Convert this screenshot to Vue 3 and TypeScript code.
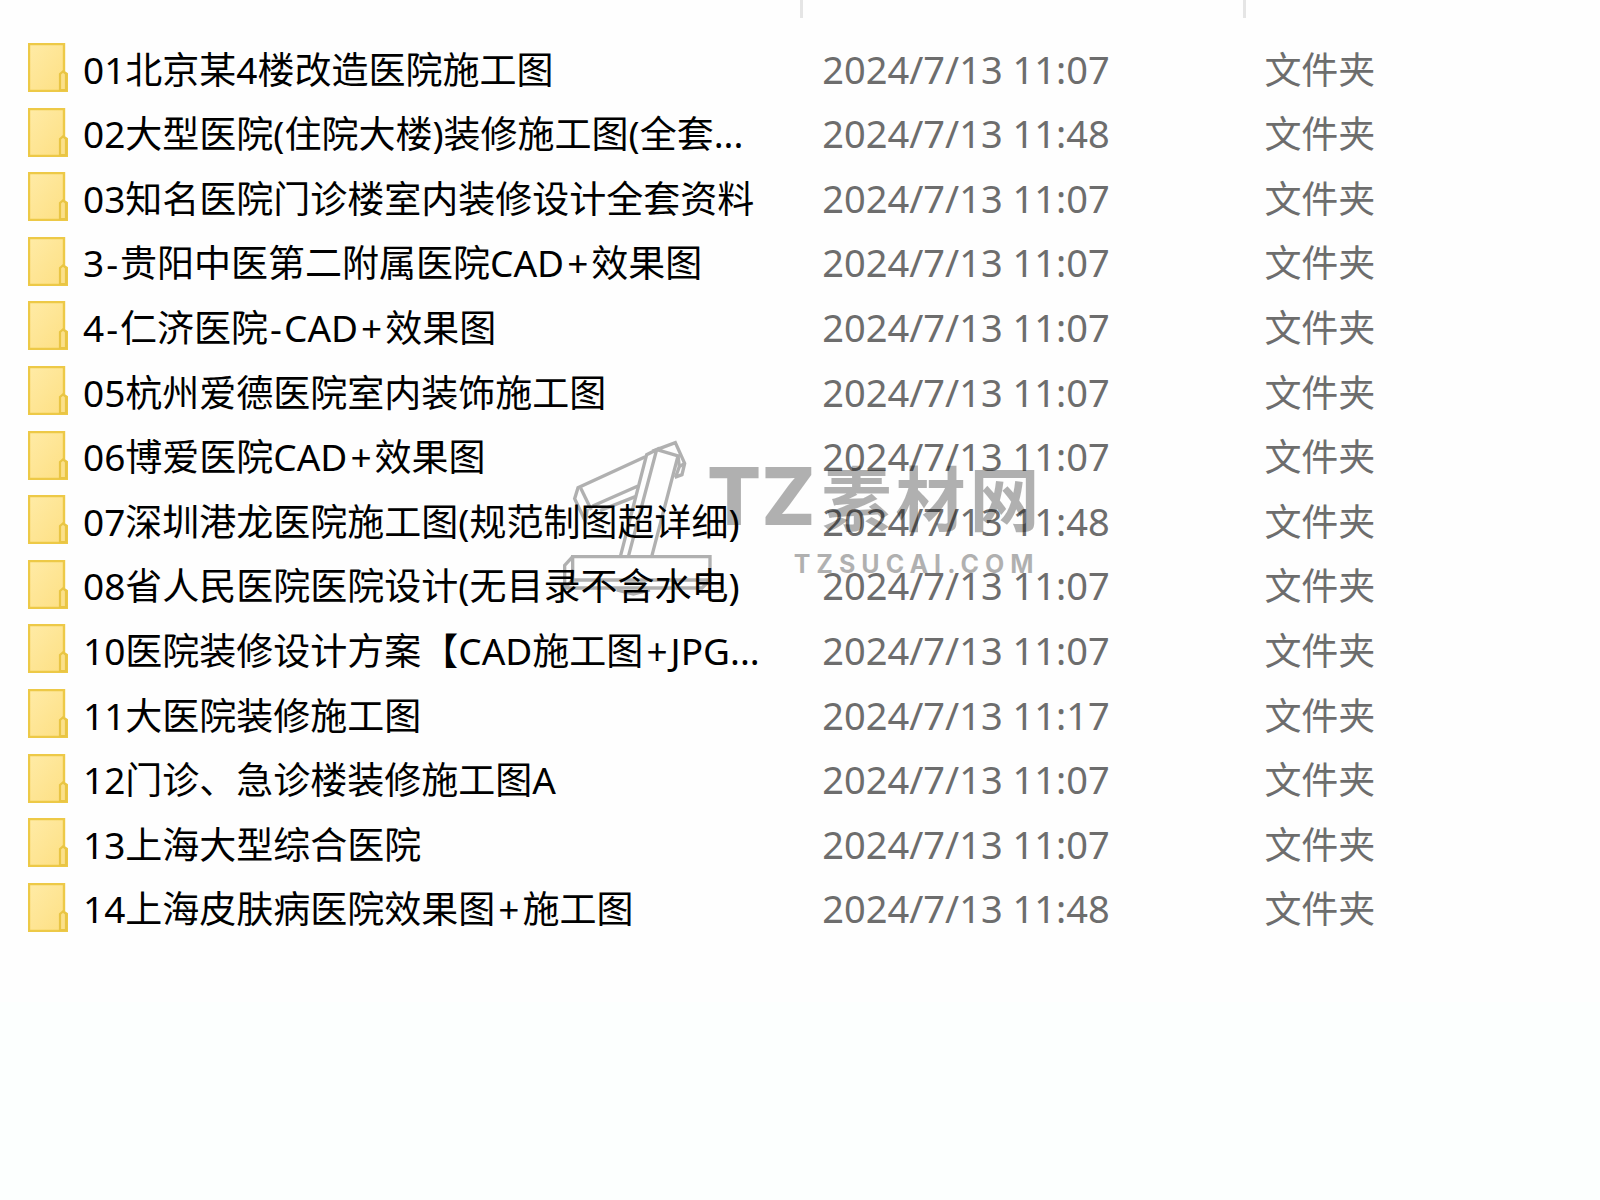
<script setup lang="ts">
interface Entry {
  name: string
  modified: string
}

const kind = '文件夹'

const entries: Entry[] = [
  { name: '01北京某4楼改造医院施工图', modified: '2024/7/13 11:07' },
  { name: '02大型医院(住院大楼)装修施工图(全套...', modified: '2024/7/13 11:48' },
  { name: '03知名医院门诊楼室内装修设计全套资料', modified: '2024/7/13 11:07' },
  { name: '3-贵阳中医第二附属医院CAD+效果图', modified: '2024/7/13 11:07' },
  { name: '4-仁济医院-CAD+效果图', modified: '2024/7/13 11:07' },
  { name: '05杭州爱德医院室内装饰施工图', modified: '2024/7/13 11:07' },
  { name: '06博爱医院CAD+效果图', modified: '2024/7/13 11:07' },
  { name: '07深圳港龙医院施工图(规范制图超详细)', modified: '2024/7/13 11:48' },
  { name: '08省人民医院医院设计(无目录不含水电)', modified: '2024/7/13 11:07' },
  { name: '10医院装修设计方案【CAD施工图+JPG...', modified: '2024/7/13 11:07' },
  { name: '11大医院装修施工图', modified: '2024/7/13 11:17' },
  { name: '12门诊、急诊楼装修施工图A', modified: '2024/7/13 11:07' },
  { name: '13上海大型综合医院', modified: '2024/7/13 11:07' },
  { name: '14上海皮肤病医院效果图+施工图', modified: '2024/7/13 11:48' },
]

// Splits a name so that its joining signs can carry a little side space.
const parts = (name: string): string[] => name.split(/([+-])/).filter(Boolean)
</script>

<template>
  <main class="explorer">
    <div class="listing">
      <div class="columns">
        <span class="col-name"></span>
        <span class="col-date"></span>
      </div>
      <table class="files">
        <colgroup>
          <col class="col-name" />
          <col class="col-date" />
          <col />
        </colgroup>
        <tbody>
          <tr v-for="entry in entries" :key="entry.name">
            <td>
              <div class="name">
                <svg class="folder" viewBox="0 0 40 49" aria-hidden="true">
                  <defs>
                    <linearGradient id="folder-fill" x1="0" y1="0" x2="1" y2="1">
                      <stop offset="0" stop-color="#ffeba6" />
                      <stop offset="1" stop-color="#fddf82" />
                    </linearGradient>
                  </defs>
                  <path d="M1 1H36V29L39 31V48H1Z" fill="url(#folder-fill)" stroke="#edc947" stroke-width="2.4" />
                  <path d="M32 47V31L35 28.5L38 31V47Z" fill="#fbe08a" stroke="#e9c544" stroke-width="2.2" />
                </svg>
                <span class="label"><span
                  v-for="(part, i) in parts(entry.name)"
                  :key="i"
                  :class="{ plus: part === '+', dash: part === '-' }"
                >{{ part }}</span></span>
              </div>
            </td>
            <td class="modified">{{ entry.modified }}</td>
            <td class="kind">{{ kind }}</td>
          </tr>
        </tbody>
      </table>
      <div class="watermark">
        <svg class="crane" viewBox="0 0 540 540" aria-hidden="true">
          <g fill="none" stroke="#000" stroke-width="10">
            <path d="M286 80L84 173L74 206L106 274L112 236" />
            <path d="M92 174L124 240" />
            <path d="M128 228L264 168M150 242L256 200" />
            <path d="M212 376L290 74L320 59L236 376" />
            <path d="M306 376L384 78L320 59L376 38L404 100L396 134L374 142" />
            <path d="M384 78L388 110L404 100M388 110L378 138" />
            <path d="M68 380H480V450H68Z" />
            <path d="M68 380L44 406V474H456L480 450M44 474L68 450" />
            <path d="M200 480L250 492L300 480" />
          </g>
        </svg>
        <div class="brand">
          <div class="brand-title">
            <span class="latin">TZ</span>
            <span class="han"><span>素</span><span>材</span><span>网</span></span>
          </div>
          <div class="domain">TZSUCAI.COM</div>
        </div>
      </div>
    </div>
  </main>
</template>

<style>
body {
  margin: 0;
  background: #fcfffe;
}
</style>

<style scoped>
.explorer {
  min-height: 100vh;
  background: #fcfffe;
  color: #000;
  font-family: "Noto Sans", "Noto Sans CJK SC", sans-serif;
  font-size: 37px;
  line-height: 48px;
}

.listing {
  position: relative;
  padding-bottom: 63px;
  background: #fefefe;
}

.columns {
  display: flex;
  height: 18px;
  margin-bottom: 17px;
}

.columns span {
  box-sizing: border-box;
  border-right: 3px solid #e5e5e5;
}

.col-name {
  width: 50.2%;
}

.col-date {
  width: 27.7%;
}

.files {
  width: 100%;
  table-layout: fixed;
  border-collapse: collapse;
}

.files tr {
  height: 65px;
}

.files tr:nth-child(5n + 2),
.files tr:nth-child(5n + 4) {
  height: 64px;
}

.files td {
  padding: 0;
  white-space: nowrap;
}

.name {
  display: flex;
  align-items: center;
  gap: 15px;
  padding-left: 28px;
}

.label {
  padding-top: 4px;
}

.plus {
  margin: 0 3px;
}

.dash {
  margin: 0 2px;
}

.folder {
  flex: none;
  width: 40px;
  height: 49px;
}

.files .modified {
  padding: 2px 0 0 19px;
  color: #6d6d6d;
  font-size: 38px;
}

.files .kind {
  padding: 4px 0 0 18px;
  color: #6d6d6d;
}

.watermark {
  position: absolute;
  top: 430px;
  left: 550px;
  display: flex;
  gap: 0;
  color: #000;
  opacity: 0.3;
  pointer-events: none;
}

.crane {
  flex: none;
  width: 180px;
  height: 180px;
  margin-right: -23px;
}

.brand {
  display: flex;
  flex-direction: column;
  align-items: flex-end;
  padding-top: 24px;
}

.brand-title {
  display: flex;
  align-items: center;
  gap: 6px;
  height: 84px;
}

.latin {
  font: 800 80px/84px Inter, sans-serif;
}

.han {
  display: flex;
  gap: 4px;
  font: 700 70px/84px "Noto Sans CJK SC", sans-serif;
}

.domain {
  margin-top: 10px;
  font: 700 25px/32px Inter, sans-serif;
  letter-spacing: 6px;
}
</style>
